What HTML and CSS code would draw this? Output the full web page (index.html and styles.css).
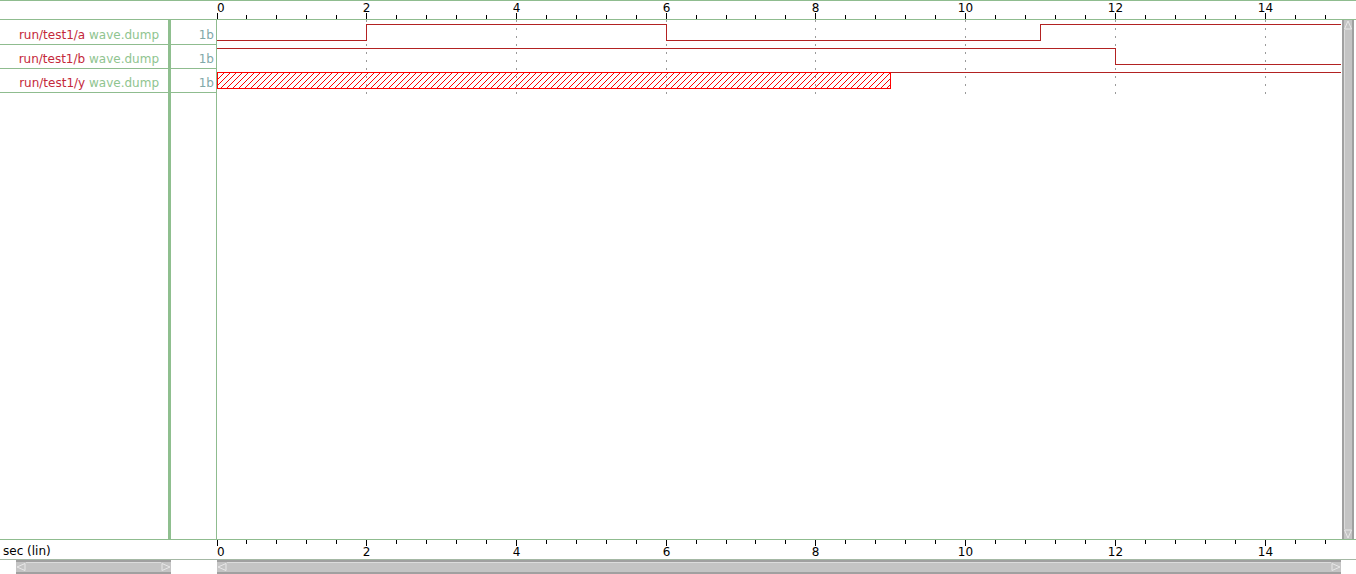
FILE: index.html
```html
<!DOCTYPE html>
<html>
<head>
<meta charset="utf-8">
<link rel="stylesheet" href="styles.css">
</head>
<body>
<div class="app">
  <div class="header">
    <div class="header-spacer"></div>
    <svg class="ruler" width="1124" height="18" viewBox="0 0 1124 18">
      <path class="tick" d="M0.5 12V18M149.5 12V18M299.5 12V18M449.5 12V18M598.5 12V18M748.5 12V18M898.5 12V18M1048.5 12V18"/>
      <path class="tick" d="M29.5 14V18M59.5 14V18M89.5 14V18M119.5 14V18M179.5 14V18M209.5 14V18M239.5 14V18M269.5 14V18M329.5 14V18M359.5 14V18M389.5 14V18M419.5 14V18M479.5 14V18M509.5 14V18M538.5 14V18M568.5 14V18M628.5 14V18M658.5 14V18M688.5 14V18M718.5 14V18M778.5 14V18M808.5 14V18M838.5 14V18M868.5 14V18M928.5 14V18M958.5 14V18M988.5 14V18M1018.5 14V18M1078.5 14V18M1108.5 14V18"/>
      <g class="rlabels">
        <text x="0" y="11" text-anchor="start">0</text>
        <text x="149.5" y="11">2</text>
        <text x="299.5" y="11">4</text>
        <text x="449.5" y="11">6</text>
        <text x="598.5" y="11">8</text>
        <text x="748.5" y="11">10</text>
        <text x="898.5" y="11">12</text>
        <text x="1048.5" y="11">14</text>
      </g>
    </svg>
  </div>
  <div class="mid">
    <div class="names">
      <div class="row row-first"><span class="label"><span class="sig">run/test1/a</span> <span class="file">wave.dump</span></span></div>
      <div class="row"><span class="label"><span class="sig">run/test1/b</span> <span class="file">wave.dump</span></span></div>
      <div class="row"><span class="label"><span class="sig">run/test1/y</span> <span class="file">wave.dump</span></span></div>
    </div>
    <div class="vals">
      <div class="row row-first"><span class="val">1b</span></div>
      <div class="row"><span class="val">1b</span></div>
      <div class="row"><span class="val">1b</span></div>
    </div>
    <svg class="wave" width="1124" height="519" viewBox="0 0 1124 519">
      <defs>
        <pattern id="hatch" patternUnits="userSpaceOnUse" width="6" height="6">
          <path d="M0 6L6 0M-1 1L1 -1M5 7L7 5" stroke="#ff0000" stroke-width="1"/>
        </pattern>
      </defs>
      <path class="grid" d="M149.5 0V75M299.5 0V75M449.5 0V75M598.5 0V75M748.5 0V75M898.5 0V75M1048.5 0V75"/>
      <path class="sigline" d="M0 20.5H149.5V4.5H449.5V20.5H823.5V4.5H1124"/>
      <path class="sigline" d="M0 28.5H898.5V44.5H1124"/>
      <rect class="xbox" x="0.5" y="52.5" width="673" height="16"/>
      <path class="sigline" d="M673.5 52.5H1124"/>
    </svg>
    <div class="vscroll">
      <div class="vbar">
        <svg class="varrow" width="8" height="10" viewBox="0 0 8 10"><path d="M4 1L7.5 9H0.5Z"/></svg>
        <div class="vthumb"></div>
        <svg class="varrow" width="8" height="10" viewBox="0 0 8 10"><path d="M4 9L7.5 1H0.5Z"/></svg>
      </div>
    </div>
  </div>
  <div class="bottom">
    <div class="unit">sec (lin)</div>
    <svg class="ruler" width="1124" height="19" viewBox="0 0 1124 19">
      <path class="tick" d="M0.5 0V6M149.5 0V6M299.5 0V6M449.5 0V6M598.5 0V6M748.5 0V6M898.5 0V6M1048.5 0V6"/>
      <path class="tick" d="M29.5 0V4M59.5 0V4M89.5 0V4M119.5 0V4M179.5 0V4M209.5 0V4M239.5 0V4M269.5 0V4M329.5 0V4M359.5 0V4M389.5 0V4M419.5 0V4M479.5 0V4M509.5 0V4M538.5 0V4M568.5 0V4M628.5 0V4M658.5 0V4M688.5 0V4M718.5 0V4M778.5 0V4M808.5 0V4M838.5 0V4M868.5 0V4M928.5 0V4M958.5 0V4M988.5 0V4M1018.5 0V4M1078.5 0V4M1108.5 0V4"/>
      <g class="rlabels">
        <text x="0" y="16" text-anchor="start">0</text>
        <text x="149.5" y="16">2</text>
        <text x="299.5" y="16">4</text>
        <text x="449.5" y="16">6</text>
        <text x="598.5" y="16">8</text>
        <text x="748.5" y="16">10</text>
        <text x="898.5" y="16">12</text>
        <text x="1048.5" y="16">14</text>
      </g>
    </svg>
  </div>
  <div class="scrollrow">
    <div class="hbar hbar-left">
      <svg class="harrow" width="10" height="8" viewBox="0 0 10 8"><path d="M1 4L9 0.5V7.5Z"/></svg>
      <div class="hthumb"></div>
      <svg class="harrow" width="10" height="8" viewBox="0 0 10 8"><path d="M9 4L1 0.5V7.5Z"/></svg>
    </div>
    <div class="hbar hbar-right">
      <svg class="harrow" width="10" height="8" viewBox="0 0 10 8"><path d="M1 4L9 0.5V7.5Z"/></svg>
      <div class="hthumb"></div>
      <svg class="harrow" width="10" height="8" viewBox="0 0 10 8"><path d="M9 4L1 0.5V7.5Z"/></svg>
    </div>
  </div>
</div>
</body>
</html>
```

FILE: styles.css
```css
html, body {
  margin: 0;
  padding: 0;
  background: #ffffff;
}
body {
  font-family: "DejaVu Sans", "Liberation Sans", sans-serif;
  font-size: 12px;
}
.app {
  width: 1356px;
  height: 574px;
  display: flex;
  flex-direction: column;
  overflow: hidden;
}
.header {
  display: flex;
  flex: none;
  height: 18px;
  border-top: 1px solid #8fbc8f;
  border-bottom: 1px solid #8fbc8f;
}
.header-spacer {
  width: 217px;
  flex: none;
}
.ruler {
  display: block;
  flex: none;
  shape-rendering: crispEdges;
}
.tick {
  stroke: #000000;
  stroke-width: 1;
  fill: none;
}
.rlabels {
  font-family: "DejaVu Sans", sans-serif;
  font-size: 12px;
  fill: #000000;
  text-anchor: middle;
}
.mid {
  display: flex;
  flex: none;
  height: 519px;
  border-bottom: 1px solid #8fbc8f;
}
.names {
  width: 168px;
  flex: none;
  border-right: 3px solid #8fbf8f;
}
.vals {
  width: 45px;
  flex: none;
  border-right: 1px solid #8fbc8f;
}
.row {
  box-sizing: border-box;
  height: 24px;
  display: flex;
  justify-content: flex-end;
  align-items: flex-end;
  padding-bottom: 2px;
  line-height: 14px;
  border-bottom: 1px solid #8fbc8f;
  white-space: pre;
}
.row-first {
  height: 25px;
}
.names .row {
  padding-right: 9px;
}
.vals .row {
  padding-right: 2px;
}
.sig {
  color: #c4283a;
}
.file {
  color: #8fc48f;
}
.val {
  color: #80a8a8;
}
.wave {
  display: block;
  flex: none;
}
.grid {
  stroke: #9a9a9a;
  stroke-width: 1;
  stroke-dasharray: 2 6;
  fill: none;
  shape-rendering: crispEdges;
}
.sigline {
  stroke: #b22222;
  stroke-width: 1;
  fill: none;
  shape-rendering: crispEdges;
}
.xbox {
  fill: url(#hatch);
  stroke: #ff0000;
  stroke-width: 1;
  shape-rendering: crispEdges;
}
.vscroll {
  width: 15px;
  flex: none;
  display: flex;
}
.vbar {
  margin-left: 1px;
  width: 12px;
  box-sizing: border-box;
  background: #a0a0a0;
  padding: 0 2px;
  display: flex;
  flex-direction: column;
}
.vthumb {
  flex: 1;
  background: #c4c4c4;
  border-left: 1px solid #dcdcdc;
}
.varrow {
  display: block;
  flex: none;
  background: #c4c4c4;
}
.varrow path, .harrow path {
  fill: #c4c4c4;
  stroke: #e8e8e8;
  stroke-width: 1;
}
.bottom {
  display: flex;
  flex: none;
  height: 19px;
}
.unit {
  width: 217px;
  flex: none;
  box-sizing: border-box;
  padding: 4px 0 0 3px;
  line-height: 14px;
  color: #000000;
}
.scrollrow {
  display: flex;
  flex: none;
  height: 14px;
  border-top: 1px solid #a4b8a4;
}
.hbar {
  display: flex;
  align-items: stretch;
  box-sizing: border-box;
  background: #a0a0a0;
  padding: 2px 0;
  height: 14px;
}
.hbar-left {
  margin-left: 16px;
  width: 155px;
}
.hbar-right {
  margin-left: 46px;
  width: 1124px;
}
.hthumb {
  flex: 1;
  background: #c4c4c4;
  border-top: 1px solid #dcdcdc;
}
.harrow {
  display: block;
  flex: none;
  align-self: center;
  background: #c4c4c4;
  height: 10px;
}
```
